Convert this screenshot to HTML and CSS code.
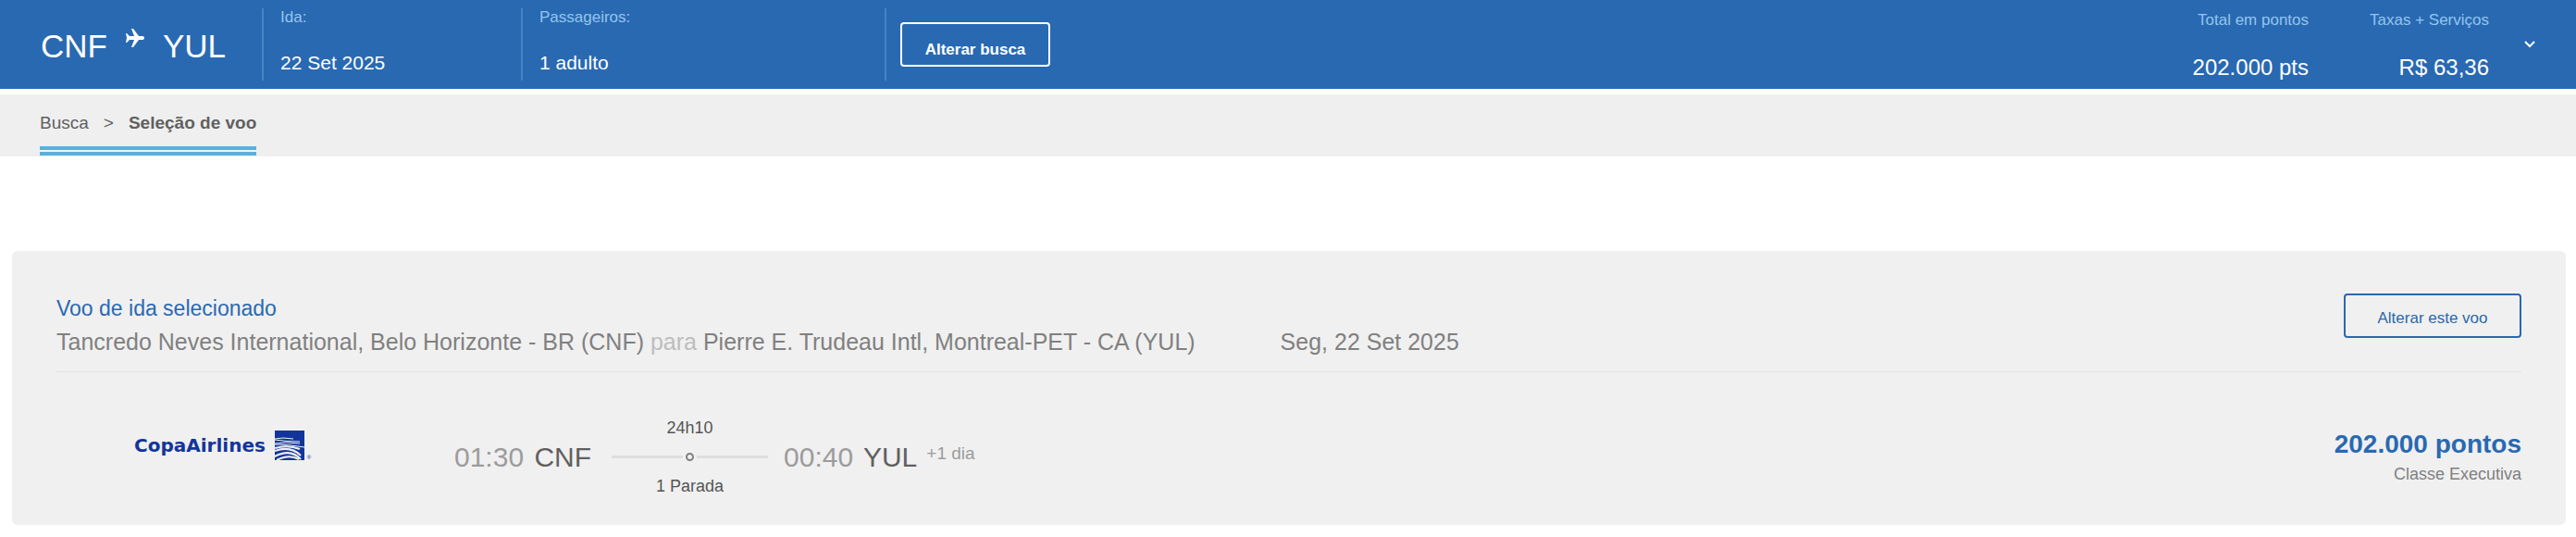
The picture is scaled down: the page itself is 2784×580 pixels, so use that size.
FILE: index.html
```html
<!DOCTYPE html>
<html lang="pt-BR">
<head>
    <meta charset="UTF-8">
    <meta name="viewport" content="width=device-width, initial-scale=1.0">
    <title>Seleção de voo</title>
    <link rel="stylesheet" href="styles.css">
</head>
<body>
    <!-- Search summary -->
    <header class="summary">
        <div class="route">
            <span>CNF</span>
            <svg class="plane" viewBox="0 0 20 20" width="20" height="20" aria-hidden="true">
                <path d="M0 5h1l3 3h5L6 0h2l6 8h4q2 0 2 2t-2 2h-4l-6 8H6l3-8H4l-3 3H0l1-5z" fill="#fff"/>
            </svg>
            <span>YUL</span>
        </div>
        <div class="info info-date">
            <span class="info-label">Ida:</span>
            <span class="info-value">22 Set 2025</span>
        </div>
        <div class="info info-passengers">
            <span class="info-label">Passageiros:</span>
            <span class="info-value">1 adulto</span>
        </div>
        <div class="info info-action">
            <button type="button" class="button button-light">Alterar busca</button>
        </div>
        <div class="totals">
            <div class="total">
                <span class="info-label">Total em pontos</span>
                <span class="total-value">202.000 pts</span>
            </div>
            <div class="total">
                <span class="info-label">Taxas + Serviços</span>
                <span class="total-value">R$ 63,36</span>
            </div>
            <button type="button" class="toggle" aria-label="Detalhes">
                <svg viewBox="0 0 12 8" width="12" height="8">
                    <path d="M1 1l5 5 5-5" fill="none" stroke="#fff" stroke-width="2"/>
                </svg>
            </button>
        </div>
    </header>

    <nav class="breadcrumb">
        <div class="steps">
            <a href="#">Busca</a>
            <span>&gt;</span>
            <strong>Seleção de voo</strong>
        </div>
    </nav>

    <!-- Selected flight -->
    <main class="flight">
        <div class="flight-header">
            <div>
                <h2>Voo de ida selecionado</h2>
                <div class="airports">
                    <p>Tancredo Neves International, Belo Horizonte - BR (CNF) <span class="to">para</span> Pierre E. Trudeau Intl, Montreal-PET - CA (YUL)</p>
                    <p>Seg, 22 Set 2025</p>
                </div>
            </div>
            <button type="button" class="button button-blue">Alterar este voo</button>
        </div>
        <div class="flight-body">
            <div class="airline">
                <span class="airline-name">CopaAirlines</span>
                <svg viewBox="0 0 32 32" width="32" height="32" aria-hidden="true">
                    <rect width="32" height="32" fill="#12359a"/>
                    <g fill="none" stroke="#f0f0f0">
                        <path d="M0 9q8-2 20 0" stroke-width="1"/>
                        <path d="M0 10q12 2 27 2" stroke-width="1"/>
                        <path d="M0 14q12-2 27 0" stroke-width="1"/>
                        <path d="M0 15q16 0 32 3" stroke-width="1"/>
                        <path d="M0 19q14-4 27 1" stroke-width="2"/>
                        <path d="M0 22q17-6 28 5" stroke-width="2"/>
                        <path d="M0 28q17-9 28 3" stroke-width="2"/>
                        <path d="M2 32q13-7 24-1" stroke-width="2"/>
                    </g>
                </svg>
                <span class="registered">®</span>
            </div>
            <div class="point"><span class="time">01:30</span> CNF</div>
            <div class="stops">
                <span>24h10</span>
                <div class="line"><i class="dot"></i></div>
                <span>1 Parada</span>
            </div>
            <div class="point"><span class="time">00:40</span> YUL</div>
            <span class="next-day">+1 dia</span>
            <div class="price">
                <strong>202.000 pontos</strong>
                <span>Classe Executiva</span>
            </div>
        </div>
    </main>
</body>
</html>
```
FILE: styles.css
```css
*, *::before, *::after {
    box-sizing: border-box;
}
body {
    margin: 0;
    background: #fff;
    color: #808080;
    font-family: "Liberation Sans", Arial, sans-serif;
    font-size: 18px;
    line-height: 20px;
}
h2, p {
    margin: 0;
    font-weight: normal;
}
.summary {
    display: flex;
    padding: 9px 44px 9px 43px;
    background: #2969b2;
    color: #fff;
}
.route {
    display: flex;
    align-items: center;
    gap: 20px;
    width: 240px;
    padding: 4px 0 0 1px;
    font-size: 35px;
    line-height: 44px;
}
.plane {
    margin-bottom: 18px;
}
.info {
    display: flex;
    flex-direction: column;
    justify-content: space-between;
    min-height: 78px;
    padding-left: 18px;
    border-left: 2px solid #4585c5;
}
.info-date {
    width: 280px;
}
.info-passengers {
    width: 393px;
}
.info-action {
    justify-content: center;
    padding-left: 15px;
}
.info-label {
    color: #93c5ed;
    font-size: 17px;
}
.info-value {
    font-size: 21px;
    line-height: 38px;
}
.button {
    height: 48px;
    padding: 12px 24px 0;
    border: 2px solid;
    border-radius: 4px;
    background: none;
    font-family: inherit;
    font-size: 17px;
    cursor: pointer;
}
.button-light {
    min-width: 162px;
    color: #fff;
    font-weight: bold;
}
.button-blue {
    min-width: 192px;
    padding-top: 6px;
    color: #2c68ab;
}
.totals {
    display: flex;
    gap: 66px;
    margin-left: auto;
    padding-top: 3px;
}
.total {
    display: flex;
    flex-direction: column;
    gap: 27px;
    text-align: right;
}
.total-value {
    font-size: 24px;
    line-height: 28px;
    white-space: nowrap;
}
.toggle {
    align-self: center;
    margin: 0 0 3px -28px;
    padding: 0;
    border: none;
    background: none;
    line-height: 8px;
    cursor: pointer;
}
.breadcrumb {
    display: flex;
    margin-top: 6px;
    padding: 21px 43px 1px;
    background: #efefef;
    color: #606060;
    font-size: 19px;
}
/* room for the double underline below the steps */
.steps {
    position: relative;
    display: flex;
    gap: 16px;
    margin-bottom: 10px;
    padding-bottom: 15px;
}
.steps::after {
    content: "";
    position: absolute;
    top: 100%;
    left: 0;
    right: 0;
    height: 10px;
    border: solid #5bb0dc;
    border-width: 4px 0;
    background: #e9f7fd;
}
.steps a {
    color: inherit;
    text-decoration: none;
}
.flight {
    margin: 102px 11px 14px 13px;
    padding: 46px 48px 32px;
    border-radius: 6px;
    background: #f0f0f0;
}
.flight-header {
    display: flex;
    justify-content: space-between;
    align-items: flex-start;
    padding-bottom: 12px;
    border-bottom: 1px solid #e3e3e3;
}
.flight-header h2 {
    color: #2969b2;
    font-size: 23px;
    line-height: 32px;
}
.airports {
    display: flex;
    gap: 92px;
    font-size: 25px;
    line-height: 40px;
}
.to {
    color: #bdbdbd;
}
.flight-body {
    display: flex;
    align-items: center;
    padding-top: 50px;
}
.airline {
    display: flex;
    align-items: center;
    width: 430px;
    padding: 0 0 26px 84px;
    color: #12359a;
}
.airline-name {
    margin-right: 10px;
    font-family: "DejaVu Sans", sans-serif;
    font-size: 20px;
    font-weight: bold;
}
.registered {
    align-self: flex-end;
    margin-left: 3px;
    font-size: 6px;
    line-height: 6px;
}
.point {
    color: #606060;
    font-size: 30px;
    line-height: 40px;
}
.time {
    margin-right: 3px;
    color: #9c9c9c;
}
.stops {
    display: flex;
    flex-direction: column;
    gap: 17px;
    width: 169px;
    margin: 0 17px 0 22px;
    color: #555;
    text-align: center;
}
.line {
    display: flex;
    align-items: center;
    justify-content: center;
    gap: 3px;
    height: 9px;
}
.line::before, .line::after {
    content: "";
    flex: 1;
    height: 3px;
    background: #dedede;
}
.dot {
    width: 9px;
    height: 9px;
    border: 2px solid #808080;
    border-radius: 50%;
}
.next-day {
    margin-left: 10px;
    padding-bottom: 8px;
    color: #9c9c9c;
    font-size: 19px;
}
.price {
    display: flex;
    flex-direction: column;
    margin-left: auto;
    text-align: right;
    line-height: 28px;
}
.price strong {
    color: #2969b2;
    font-size: 28px;
    line-height: 36px;
}
```
